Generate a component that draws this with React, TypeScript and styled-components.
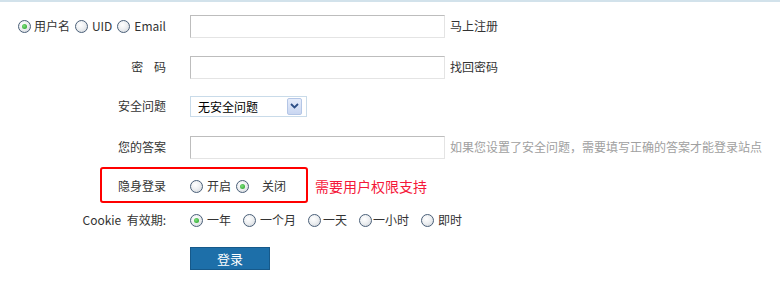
import styled, { createGlobalStyle } from "styled-components"

const GlobalStyle = createGlobalStyle`
    html, body { margin: 0; padding: 0; background: #fff; }
    body {
        font-family: "Noto Sans CJK SC", "Noto Sans", sans-serif;
        font-size: 12px;
        color: #333;
    }
`

type Opt = { text: string, checked?: boolean, gap?: number }

const Radio = ({ text, checked, gap = 3 }: Opt) => (
    <Option $gap={gap}>
        <Dot $checked={!!checked} />
        <span>{text}</span>
    </Option>
)

const LoginForm = () => {
    return (
        <Page>
            <GlobalStyle />
            <Row $top={12}>
                <Label>
                    <Group $space={5}>
                        <Radio text="用户名" checked />
                        <Radio text="UID" gap={4} />
                        <Radio text="Email" gap={4} />
                    </Group>
                </Label>
                <Field>
                    <TextInput autoFocus />
                    <Side>马上注册</Side>
                </Field>
            </Row>
            <Row $top={17}>
                <Label>密&nbsp;&nbsp;&nbsp;&nbsp;码</Label>
                <Field>
                    <TextInput type="password" />
                    <Side>找回密码</Side>
                </Field>
            </Row>
            <Row $top={15}>
                <Label>安全问题</Label>
                <Field>
                    <Select>
                        <span>无安全问题</span>
                        <Arrow>
                            <svg width="9" height="6" viewBox="0 0 9 6">
                                <path d="M1 1 L4.5 4.5 L8 1" fill="none" stroke="#2d4f86" strokeWidth="1.8" />
                            </svg>
                        </Arrow>
                    </Select>
                </Field>
            </Row>
            <Row $top={17}>
                <Label>您的答案</Label>
                <Field>
                    <TextInput />
                    <Hint>如果您设置了安全问题，需要填写正确的答案才能登录站点</Hint>
                </Field>
            </Row>
            <Row $top={15}>
                <Mark />
                <Label>隐身登录</Label>
                <Field>
                    <Group $space={5}>
                        <Radio text="开启" gap={4} />
                        <Radio text="关闭" checked gap={13} />
                    </Group>
                    <Notice>需要用户权限支持</Notice>
                </Field>
            </Row>
            <Row $top={10}>
                <Label>Cookie&nbsp;&nbsp;有效期:</Label>
                <Field>
                    <Group $space={12}>
                        <Radio text="一年" checked gap={4} />
                        <Radio text="一个月" gap={4} />
                        <Radio text="一天" gap={2} />
                        <Radio text="一小时" gap={1} />
                        <Radio text="即时" gap={4} />
                    </Group>
                </Field>
            </Row>
            <Row $top={14}>
                <Label />
                <Field>
                    <Submit>登录</Submit>
                </Field>
            </Row>
        </Page>
    )
}

const Page = styled.div`
    width: 780px;
    height: 284px;
    box-sizing: border-box;
    border-top: 2px solid #d2e2eb;
    overflow: hidden;
`

const Row = styled.div<{ $top: number }>`
    position: relative;
    display: grid;
    grid-template-columns: 166px 1fr;
    column-gap: 24px;
    align-items: center;
    height: 24px;
    margin-top: ${p => p.$top}px;
    line-height: 24px;
`

const Label = styled.div`
    display: flex;
    justify-content: flex-end;
    align-items: center;
    white-space: nowrap;
`

const Field = styled.div`
    display: flex;
    align-items: center;
    white-space: nowrap;
`

const Group = styled.div<{ $space: number }>`
    display: flex;
    align-items: center;
    gap: ${p => p.$space}px;
`

const Option = styled.label<{ $gap: number }>`
    display: flex;
    align-items: center;
    gap: ${p => p.$gap}px;
`

const Dot = styled.span<{ $checked: boolean }>`
    position: relative;
    width: 13px;
    height: 13px;
    box-sizing: border-box;
    border-radius: 50%;
    border: 1px solid #4a5f78;
    background: radial-gradient(circle at 40% 35%, #ffffff 0%, #eef0f2 45%, #cdd2d8 100%);
    &::after {
        content: "";
        display: ${p => (p.$checked ? "block" : "none")};
        position: absolute;
        left: 3px;
        top: 3px;
        width: 5px;
        height: 5px;
        border-radius: 50%;
        background: radial-gradient(circle at 40% 40%, #7ee07e, #1f9c1f);
    }
`

const TextInput = styled.input`
    width: 255px;
    height: 23px;
    box-sizing: border-box;
    margin: 0;
    padding: 2px 4px;
    border: 1px solid #e4e4e4;
    border-top-color: #bdbdbd;
    border-left-color: #bdbdbd;
    outline: none;
    font: inherit;
    caret-color: #000;
`

const Side = styled.span`
    margin-left: 5px;
`

const Hint = styled.span`
    margin-left: 5px;
    color: #a0a0a0;
`

const Select = styled.div`
    display: flex;
    align-items: center;
    justify-content: space-between;
    width: 117px;
    height: 21px;
    box-sizing: border-box;
    padding: 0 4px 0 7px;
    border: 1px solid #c9dbe9;
    color: #000;
    line-height: 19px;
`

const Arrow = styled.span`
    display: flex;
    align-items: center;
    justify-content: center;
    width: 15px;
    height: 17px;
    box-sizing: border-box;
    border: 1px solid #b4c6e6;
    border-radius: 2px;
    background: linear-gradient(#e6edfb, #c9d6f1);
`

const Mark = styled.div`
    position: absolute;
    left: 100px;
    top: -7px;
    width: 208px;
    height: 36px;
    box-sizing: border-box;
    border: 2px solid #ff0000;
    border-radius: 3px;
    pointer-events: none;
`

const Notice = styled.span`
    margin-left: 29px;
    font-size: 14px;
    color: #f5173a;
`

const Submit = styled.button`
    width: 80px;
    height: 23px;
    margin: 0;
    padding: 0;
    border: 1px solid #16598a;
    background: #1d6fa9;
    color: #fff;
    font-family: inherit;
    font-size: 13px;
    line-height: 21px;
`

export default LoginForm
